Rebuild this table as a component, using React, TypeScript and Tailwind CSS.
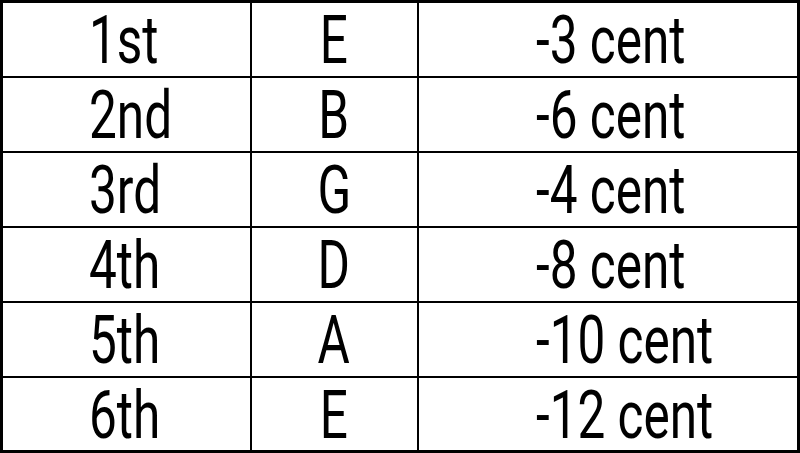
const rows = [
  ["1st", "E", "-3 cent"],
  ["2nd", "B", "-6 cent"],
  ["3rd", "G", "-4 cent"],
  ["4th", "D", "-8 cent"],
  ["5th", "A", "-10 cent"],
  ["6th", "E", "-12 cent"],
];

export default function App() {
  return (
    <div className="w-[800px] h-[453px] bg-white" style={{ fontFamily: "Roboto, 'Liberation Sans', sans-serif" }}>
      <table className="w-[800px] border-collapse border-[3px] border-black">
        <tbody>
          {rows.map((r, i) => (
            <tr key={i} className="h-[75px]">
              <td className="w-[249px] border-2 border-black p-0 pl-[86px] text-left text-[66px] text-black leading-none">
                <span className="inline-block origin-left scale-x-[0.75] pt-[4px]">{r[0]}</span>
              </td>
              <td className="w-[167px] border-2 border-black p-0 text-center text-[66px] text-black leading-none">
                <span className="inline-block scale-x-[0.75] pt-[4px]">{r[1]}</span>
              </td>
              <td className="border-2 border-black p-0 pl-[117px] text-left text-[66px] text-black leading-none">
                <span className="inline-block origin-left scale-x-[0.75] pt-[4px]">{r[2]}</span>
              </td>
            </tr>
          ))}
        </tbody>
      </table>
    </div>
  );
}
